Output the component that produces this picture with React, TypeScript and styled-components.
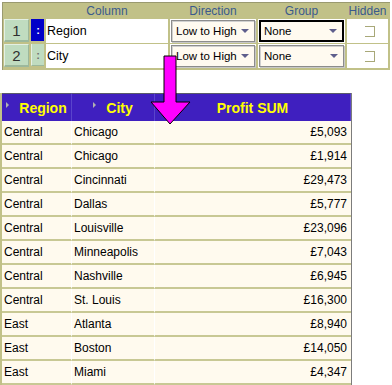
import styled, { createGlobalStyle } from 'styled-components';

const GlobalStyle = createGlobalStyle`
  body {
    margin: 0;
    background: #ffffff;
    font-family: "Liberation Sans", Arial, sans-serif;
  }
`;

const Page = styled.div`
  position: relative;
  width: 392px;
  height: 385px;
  overflow: hidden;
  background: #ffffff;
`;

/* ---------- sort settings grid ---------- */

const SortGrid = styled.div`
  display: grid;
  grid-template-columns: 25px 13px 122px 86px 87px 41px;
  grid-template-rows: 14px 24px 24px;
  column-gap: 2px;
  row-gap: 1px;
  width: 385px;
  margin: 2px 0 0 2px;
  padding: 1px 1px 2px 1px;
  background: #c1c188;
  border-top: 1px solid #9a9a70;
  border-left: 1px solid #9a9a70;
`;

const HeadCell = styled.div<{ $span?: number }>`
  grid-column: span ${(p) => p.$span ?? 1};
  display: flex;
  align-items: center;
  justify-content: center;
  font-size: 12px;
  color: #3a5a8c;
  line-height: 1;
`;

const NumButton = styled.div`
  display: flex;
  align-items: center;
  justify-content: center;
  background: #c0dcc0;
  border-top: 1px solid #e4f0e4;
  border-left: 1px solid #e4f0e4;
  border-bottom: 2px solid #9cb89c;
  border-right: 1px solid #9cb89c;
  font-size: 15px;
  color: #303030;
  margin-bottom: 1px;
`;

const Handle = styled.div<{ $active?: boolean }>`
  display: flex;
  align-items: center;
  justify-content: center;
  background: ${(p) => (p.$active ? '#0000c8' : '#c0dcc0')};
  border-left: 1px solid ${(p) => (p.$active ? '#0000c8' : '#e4f0e4')};
  border-bottom: 1px solid ${(p) => (p.$active ? '#0000c8' : '#9cb89c')};
  color: ${(p) => (p.$active ? '#ffffff' : '#707070')};
  font-size: 11px;
  font-weight: bold;
  margin-bottom: 2px;
`;

const NameCell = styled.div`
  display: flex;
  align-items: center;
  background: #ffffff;
  padding-left: 1px;
  font-size: 12.5px;
  color: #000000;
`;

const SelectCell = styled.div`
  display: flex;
  align-items: stretch;
  background: #ffffff;
  padding: 1px;
`;

const Select = styled.div<{ $focused?: boolean }>`
  flex: 1;
  display: flex;
  align-items: center;
  justify-content: space-between;
  padding: 0 5px 0 ${(p) => (p.$focused ? '3px' : '4px')};
  background: #fffaf0;
  font-size: 11.5px;
  color: #000000;
  border: ${(p) => (p.$focused ? '2px solid #000000' : '1px solid #8c8c8c')};
  box-shadow: ${(p) => (p.$focused ? 'none' : 'inset 1px 1px 0 #d0d0d0, 1px 1px 0 #c8c8c8')};
`;

const DropArrow = styled.span`
  width: 0;
  height: 0;
  border-left: 4px solid transparent;
  border-right: 4px solid transparent;
  border-top: 4px solid #5e5e8c;
`;

const CheckCell = styled.div`
  display: flex;
  align-items: center;
  justify-content: center;
  background: #ffffff;
`;

const Check = styled.span`
  width: 9px;
  height: 9px;
  margin-left: 4px;
  border-top: 1px solid #a8a878;
  border-right: 1px solid #a8a878;
  border-bottom: 1px solid #a8a878;
`;

/* ---------- result table ---------- */

const Results = styled.div`
  display: grid;
  grid-template-columns: 70px 83px 196px;
  width: 349px;
  margin-top: 23px;
  border-left: 2px solid #c1c188;
  border-right: 1px solid #7c7c7c;
`;

const ColHead = styled.div`
  display: flex;
  align-items: center;
  justify-content: center;
  gap: 10px;
  height: 27px;
  background: #3f1fbf;
  border-top: 1px solid #5a5a6a;
  border-right: 1px solid #5a44cc;
  color: #ffff00;
  font-size: 14px;
  font-weight: bold;
  &:last-child {
    border-right: none;
  }
`;

const SortMark = styled.span`
  width: 0;
  height: 0;
  margin-top: -6px;
  border-top: 3px solid transparent;
  border-bottom: 3px solid transparent;
  border-left: 3px solid #b0b0b0;
`;

const Cell = styled.div<{ $align?: 'left' | 'right' }>`
  display: flex;
  align-items: center;
  justify-content: ${(p) => (p.$align === 'right' ? 'flex-end' : 'flex-start')};
  height: 22px;
  padding: 0 4px 0 ${(p) => (p.$align === 'right' ? '4px' : '2px')};
  background: #fffaee;
  border-bottom: 2px solid #c8c894;
  border-right: 1px solid #ffffff;
  font-size: 12px;
  color: #000000;
  &:nth-child(3n) {
    border-right: none;
  }
`;

const Pointer = styled.svg`
  position: absolute;
  left: 150px;
  top: 54px;
`;

const rows: [string, string, string][] = [
  ['Central', 'Chicago', '£5,093'],
  ['Central', 'Chicago', '£1,914'],
  ['Central', 'Cincinnati', '£29,473'],
  ['Central', 'Dallas', '£5,777'],
  ['Central', 'Louisville', '£23,096'],
  ['Central', 'Minneapolis', '£7,043'],
  ['Central', 'Nashville', '£6,945'],
  ['Central', 'St. Louis', '£16,300'],
  ['East', 'Atlanta', '£8,940'],
  ['East', 'Boston', '£14,050'],
  ['East', 'Miami', '£4,347'],
];

const sortRows = [
  { n: 1, name: 'Region', active: true, focused: true },
  { n: 2, name: 'City', active: false, focused: false },
];

function App() {
  return (
    <Page>
      <GlobalStyle />
      <SortGrid>
        <HeadCell $span={2} />
        <HeadCell>Column</HeadCell>
        <HeadCell>Direction</HeadCell>
        <HeadCell>Group</HeadCell>
        <HeadCell>Hidden</HeadCell>
        {sortRows.map((r) => (
          <>
            <NumButton key={`n${r.n}`}>{r.n}</NumButton>
            <Handle key={`h${r.n}`} $active={r.active}>:</Handle>
            <NameCell key={`c${r.n}`}>{r.name}</NameCell>
            <SelectCell key={`d${r.n}`}>
              <Select>
                Low to High
                <DropArrow />
              </Select>
            </SelectCell>
            <SelectCell key={`g${r.n}`}>
              <Select $focused={r.focused}>
                None
                <DropArrow />
              </Select>
            </SelectCell>
            <CheckCell key={`x${r.n}`}>
              <Check />
            </CheckCell>
          </>
        ))}
      </SortGrid>

      <Results>
        <ColHead>
          <SortMark />
          Region
        </ColHead>
        <ColHead>
          <SortMark />
          City
        </ColHead>
        <ColHead>Profit SUM</ColHead>
        {rows.map(([region, city, profit], i) => (
          <>
            <Cell key={`r${i}`}>{region}</Cell>
            <Cell key={`c${i}`}>{city}</Cell>
            <Cell key={`p${i}`} $align="right">
              {profit}
            </Cell>
          </>
        ))}
      </Results>

      <Pointer width="42" height="72" viewBox="0 0 42 72">
        <polygon
          points="14,2 26,2 26,48 40,48 20,70 1,48 14,48"
          fill="#ff00ff"
          stroke="#000000"
          strokeWidth="1"
        />
      </Pointer>
    </Page>
  );
}

export default App;
